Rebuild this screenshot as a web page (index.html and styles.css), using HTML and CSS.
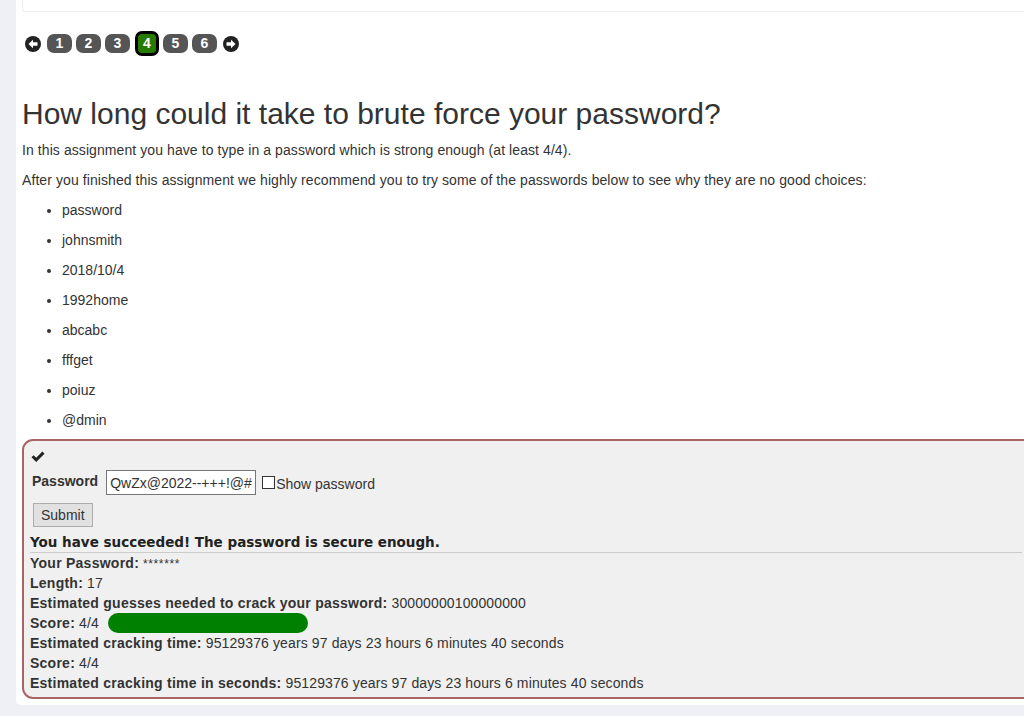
FILE: index.html
```html
<!DOCTYPE html>
<html lang="en">
<head>
  <meta charset="UTF-8">
  <title>Secure Passwords</title>
  <meta name="viewport" content="width=device-width, initial-scale=1.0">
  <link rel="stylesheet" href="styles.css">
</head>
<body>
  <div class="panel">
    <div class="top-card"></div>

    <!-- lesson pages -->
    <div class="pager">
      <svg class="arrow" viewBox="0 0 16 16"><circle cx="8" cy="8" r="8" fill="#222"/><path d="M3.5 8 L8 3.8 L8 6.3 L12.5 6.3 L12.5 9.7 L8 9.7 L8 12.2 Z" fill="#fff"/></svg>
      <span class="page">1</span>
      <span class="page">2</span>
      <span class="page">3</span>
      <span class="page active">4</span>
      <span class="page">5</span>
      <span class="page">6</span>
      <svg class="arrow" viewBox="0 0 16 16"><circle cx="8" cy="8" r="8" fill="#222"/><path d="M12.5 8 L8 3.8 L8 6.3 L3.5 6.3 L3.5 9.7 L8 9.7 L8 12.2 Z" fill="#fff"/></svg>
    </div>

    <h1>How long could it take to brute force your password?</h1>
    <p>In this assignment you have to type in a password which is strong enough (at least 4/4).</p>
    <p>After you finished this assignment we highly recommend you to try some of the passwords below to see why they are no good choices:</p>
    <ul class="bad-passwords">
      <li>password</li>
      <li>johnsmith</li>
      <li>2018/10/4</li>
      <li>1992home</li>
      <li>abcabc</li>
      <li>fffget</li>
      <li>poiuz</li>
      <li>@dmin</li>
    </ul>

    <div class="attack-box">
      <svg class="check" viewBox="0 0 14 12"><path d="M0.5 6.3 L2.6 4.2 L5.2 6.8 L11.4 0.6 L13.5 2.7 L5.2 11 Z" fill="#222"/></svg>
      <form class="attack-form">
        <div class="field">
          <label>Password</label>
          <input type="text" value="QwZx@2022--+++!@#">
          <input type="checkbox" class="show"><span>Show password</span>
        </div>
        <button type="button">Submit</button>
      </form>

      <div class="feedback">You have succeeded! The password is secure enough.</div>
      <div class="output">
        <div class="row"><b>Your Password:</b> <span class="stars">*******</span></div>
        <div class="row"><b>Length:</b> 17</div>
        <div class="row"><b>Estimated guesses needed to crack your password:</b> 30000000100000000</div>
        <div class="row"><b>Score:</b> 4/4 <span class="meter"></span></div>
        <div class="row"><b>Estimated cracking time:</b> 95129376 years 97 days 23 hours 6 minutes 40 seconds</div>
        <div class="row"><b>Score:</b> 4/4</div>
        <div class="row"><b>Estimated cracking time in seconds:</b> 95129376 years 97 days 23 hours 6 minutes 40 seconds</div>
      </div>
    </div>
  </div>
</body>
</html>
```

FILE: styles.css
```css
body {
  margin: 0;
  padding-left: 16px;
  background-color: #eef0f5;
  font-family: "Liberation Sans", Arial, sans-serif;
  font-size: 14px;
  color: #333;
  height: 716px;
  overflow: hidden;
}

.panel {
  background: #fff;
  height: 705px;
  padding-left: 6px;
  border-bottom-left-radius: 5px;
  box-sizing: border-box;
  overflow: hidden;
}

.top-card {
  height: 11px;
  border-bottom: 1px solid #eceef0;
  border-left: 1px solid #eceef0;
  border-bottom-left-radius: 4px;
}

/* Pager */
.pager {
  display: flex;
  align-items: center;
  margin-top: 19px;
  padding-left: 3px;
  height: 25px;
}

.arrow {
  width: 16px;
  height: 16px;
}

.pager .arrow:first-child {
  margin-right: 6px;
}

.pager .arrow:last-child {
  margin-left: 2px;
}

.page {
  display: inline-block;
  width: 25px;
  height: 19px;
  line-height: 19px;
  margin-right: 4px;
  border-radius: 7px;
  background-color: #555;
  color: #fff;
  font-weight: bold;
  text-align: center;
  font-size: 14px;
}

.page.active {
  width: 18px;
  height: 19px;
  border: 3px solid #000;
  background-color: #267b00;
  margin-left: 1px;
  margin-right: 4px;
}

h1 {
  font-size: 30px;
  font-weight: normal;
  margin: 41px 0 0;
  line-height: 33px;
}

p {
  margin: 10px 0 0;
  line-height: 20px;
  letter-spacing: 0.08px;
}

.bad-passwords {
  margin: 0;
  padding-left: 40px;
}

.bad-passwords li {
  margin-top: 10px;
  line-height: 20px;
}

/* Assignment box */
.attack-box {
  margin-top: 9px;
  margin-right: -20px;
  border: 2px solid #a96565;
  border-radius: 11px;
  background-color: #f0f0f0;
  padding: 10px 20px 5px 6px;
  height: 241px;
}

.check {
  display: block;
  width: 14px;
  height: 12px;
  margin-left: 1px;
}

.field {
  display: flex;
  align-items: center;
  margin-top: 7px;
  padding-left: 2px;
}

.field label {
  font-weight: bold;
  margin-right: 8px;
  margin-top: -4px;
}

.field input[type="text"] {
  width: 150px;
  height: 25px;
  box-sizing: border-box;
  border: 1px solid #767676;
  padding: 0 3px;
  font-family: "Liberation Sans", Arial, sans-serif;
  font-size: 14px;
  color: #333;
  margin: 0;
}

.field .show {
  width: 13px;
  height: 13px;
  margin: 0 0 0 6px;
  appearance: none;
  border: 1px solid #333;
  background: #fff;
}

.field span {
  margin-top: 2px;
  margin-left: 1px;
}

.attack-form button {
  margin: 8px 0 0 3px;
  height: 24px;
  padding: 0 7px;
  font-family: "Liberation Sans", Arial, sans-serif;
  font-size: 14px;
  color: #333;
  background: #e1e1e1;
  border: 1px solid #adadad;
}

.feedback {
  font-family: "DejaVu Sans", Verdana, sans-serif;
  font-weight: bold;
  font-size: 13.5px;
  color: #222;
  margin-top: 6px;
  line-height: 18px;
  padding-bottom: 1px;
  border-bottom: 1px solid #ccc;
}

.output .row {
  height: 20px;
  line-height: 20px;
  letter-spacing: 0.12px;
}

.output .row b {
  letter-spacing: 0.25px;
}

.stars {
  font-size: 12px;
  letter-spacing: 0.6px;
}

.meter {
  display: inline-block;
  vertical-align: top;
  width: 200px;
  height: 20px;
  border-radius: 10px;
  background-color: #008000;
  margin-left: 5px;
}
```
